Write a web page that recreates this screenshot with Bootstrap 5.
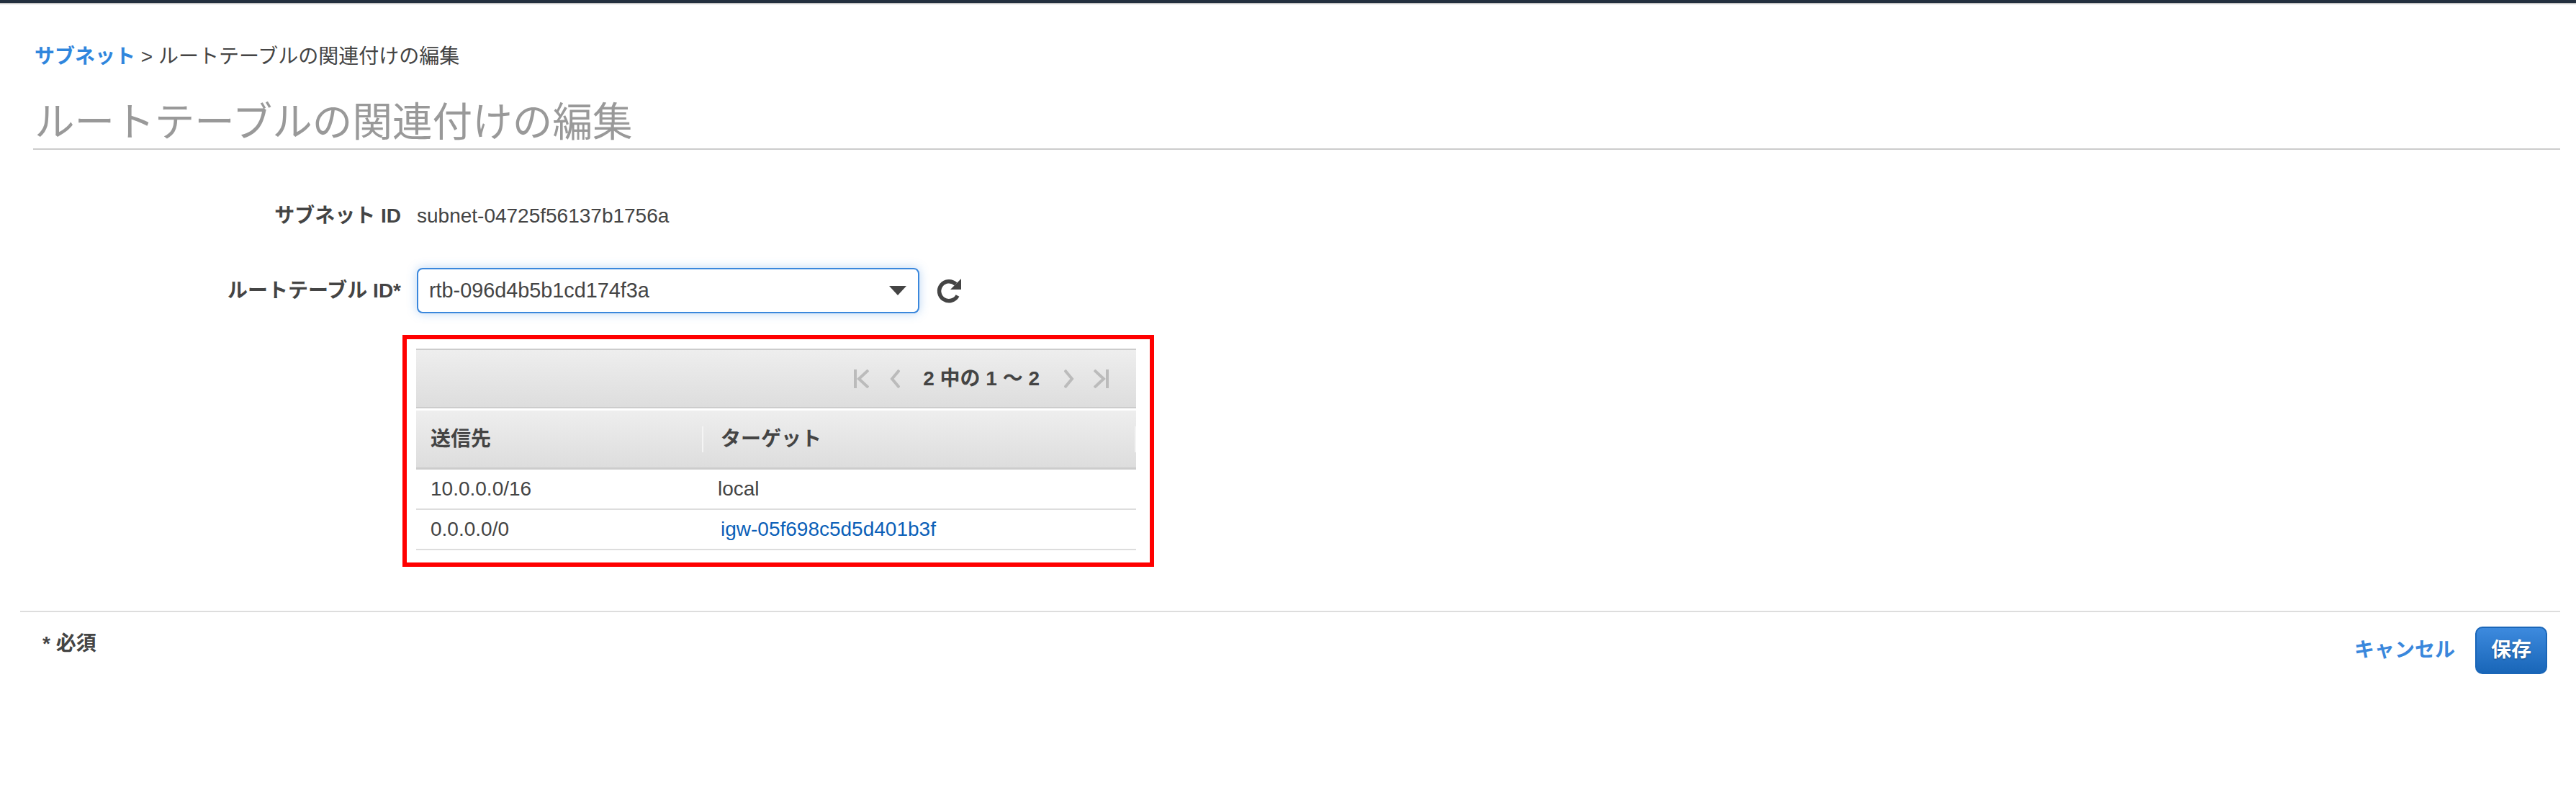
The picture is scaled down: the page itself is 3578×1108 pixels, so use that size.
<!DOCTYPE html>
<html lang="ja">
<head>
    <meta charset="UTF-8">
    <title>ルートテーブルの関連付けの編集</title>
    <link href="https://cdn.jsdelivr.net/npm/bootstrap@5.3.0/dist/css/bootstrap.min.css" rel="stylesheet">
    <style>
        body {
            font-family: "Liberation Sans", "Noto Sans CJK JP", sans-serif;
            font-size: 28px;
            line-height: 40px;
            color: #444;
            background: #fff;
        }
        a { text-decoration: none; }
        .top-strip {
            height: 6px;
            background: #232f3e;
            border-bottom: 2px solid #c8c8c8;
        }
        .page-head { padding: 53px 22px 0 46px; }
        .crumbs { padding-left: 2px; height: 40px; }
        .crumbs a { color: #2f86dd; font-weight: 700; }
        .page-title {
            font-size: 55.6px;
            line-height: 71px;
            font-weight: 400;
            color: #999;
            margin: 36px 0 0;
            padding-left: 2px;
            border-bottom: 2px solid #ccc;
        }
        .form-area { padding-top: 72px; }
        .field-label {
            width: 557px;
            flex: none;
            text-align: right;
            font-weight: 700;
            margin-right: 22px;
        }
        .rtb-row { margin-top: 52px; }
        .rtb-select.form-select {
            width: 698px;
            height: 63px;
            padding: 0 50px 0 15px;
            font-size: 28.8px;
            color: #444;
            border: 2px solid #3a87dc;
            border-radius: 8px;
            box-shadow: 0 0 14px rgba(58, 135, 220, .35);
            background-image: url("data:image/svg+xml,%3Csvg xmlns='http://www.w3.org/2000/svg' viewBox='0 0 24 13'%3E%3Cpath fill='%23444' d='M0 0h24L12 13z'/%3E%3C/svg%3E");
            background-position: right 16px center;
            background-size: 24px 13px;
        }
        .refresh-btn { margin-left: 23px; line-height: 0; }
        .route-box {
            width: 1044px;
            margin: 30px 0 0 559px;
            padding: 13px 19px 17px 13px;
            border: 6px solid #f00;
        }
        .pager-bar {
            height: 83px;
            padding-right: 38px;
            border-top: 2px solid #ccc;
            border-bottom: 2px solid #ccc;
            background: linear-gradient(#eee, #ddd);
            font-weight: 700;
        }
        .pager-text { margin: 0 34px 0 32px; }
        .pager-first { margin-right: 29px; }
        .pager-next { margin-right: 27px; }
        .routes {
            table-layout: fixed;
            width: 100%;
            margin: 3px 0 0;
            color: #444;
            border-collapse: separate;
            border-spacing: 0;
        }
        .routes th {
            height: 82px;
            padding: 0 0 0 20px;
            vertical-align: middle;
            font-weight: 700;
            background: linear-gradient(#eee, #ddd);
            border-bottom: 3px solid #ccc;
        }
        .routes th + th { padding-left: 24px; }
        .routes th span {
            display: block;
            line-height: 36px;
            border-right: 2px solid #f4f4f4;
        }
        .routes td {
            height: 56px;
            padding: 0 0 0 20px;
            vertical-align: middle;
            border-bottom: 2px solid #ddd;
            background: #fff;
            color: #444;
        }
        .routes a { color: #0b5fb8; padding-left: 4px; }
        .form-foot {
            margin: 61px 22px 0 28px;
            padding-top: 20px;
            border-top: 2px solid #ddd;
        }
        .req-note { padding: 4px 0 0 31px; font-weight: 700; }
        .cancel-link { color: #3a87dc; font-weight: 700; margin-right: 28px; }
        .save-btn.btn {
            width: 100px;
            height: 66px;
            margin-right: 18px;
            padding: 0;
            font-size: 28px;
            font-weight: 700;
            color: #fff;
            border: 2px solid #1a66b8;
            border-radius: 10px;
            background: linear-gradient(#3d8ade, #1966b8);
            text-shadow: 0 1px 2px rgba(0, 0, 0, .4);
        }
    </style>
</head>
<body>
    <div class="top-strip"></div>

    <div class="page-head">
        <div class="crumbs"><a href="#">サブネット</a> &gt; ルートテーブルの関連付けの編集</div>
        <h1 class="page-title">ルートテーブルの関連付けの編集</h1>
    </div>

    <form class="form-area">
        <div class="d-flex align-items-center">
            <div class="field-label">サブネット ID</div>
            <div>subnet-04725f56137b1756a</div>
        </div>

        <div class="d-flex align-items-center rtb-row">
            <div class="field-label">ルートテーブル ID*</div>
            <select class="form-select rtb-select">
                <option>rtb-096d4b5b1cd174f3a</option>
            </select>
            <span class="refresh-btn">
                <svg width="36" height="36" viewBox="0 0 36 36">
                    <path d="M30 24.5A13.5 13.5 0 1 1 27.5 8.5" fill="none" stroke="#444" stroke-width="5.5"/>
                    <path d="M35 1v15H20z" fill="#444"/>
                </svg>
            </span>
        </div>

        <div class="route-box">
            <div class="pager-bar d-flex align-items-center justify-content-end">
                <svg width="21" height="26" viewBox="0 0 21 26" class="pager-first"><path d="M2 0v26M20 1L7 13l13 12" fill="none" stroke="#bbb" stroke-width="4"/></svg>
                <svg width="14" height="26" viewBox="0 0 14 26"><path d="M13 1L3 13l10 12" fill="none" stroke="#bbb" stroke-width="4"/></svg>
                <span class="pager-text">2 中の 1 〜 2</span>
                <svg width="14" height="26" viewBox="0 0 14 26" class="pager-next"><path d="M1 1l10 12L1 25" fill="none" stroke="#bbb" stroke-width="4"/></svg>
                <svg width="21" height="26" viewBox="0 0 21 26"><path d="M19 0v26M1 1l13 12L1 25" fill="none" stroke="#bbb" stroke-width="4"/></svg>
            </div>
            <table class="routes">
                <colgroup>
                    <col style="width: 399px">
                    <col>
                </colgroup>
                <thead>
                    <tr>
                        <th><span>送信先</span></th>
                        <th><span>ターゲット</span></th>
                    </tr>
                </thead>
                <tbody>
                    <tr>
                        <td>10.0.0.0/16</td>
                        <td>local</td>
                    </tr>
                    <tr>
                        <td>0.0.0.0/0</td>
                        <td><a href="#">igw-05f698c5d5d401b3f</a></td>
                    </tr>
                </tbody>
            </table>
        </div>

        <div class="form-foot d-flex justify-content-between">
            <div class="req-note">* 必須</div>
            <div class="d-flex align-items-center">
                <a href="#" class="cancel-link">キャンセル</a>
                <button type="button" class="btn save-btn">保存</button>
            </div>
        </div>
    </form>

    <script src="https://cdn.jsdelivr.net/npm/bootstrap@5.3.0/dist/js/bootstrap.bundle.min.js"></script>
</body>
</html>
